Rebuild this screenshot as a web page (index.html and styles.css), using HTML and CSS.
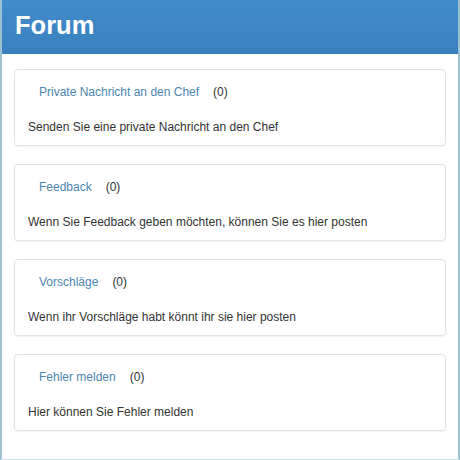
FILE: index.html
```html
<!DOCTYPE html>
<html>
<head>
<meta charset="utf-8">
<link rel="stylesheet" href="styles.css">
</head>
<body>
<div class="frame">
  <header class="header"><h1 class="title">Forum</h1></header>
  <main class="content">
    <section class="card">
      <div class="card-head"><a class="card-link" href="#">Private Nachricht an den Chef</a><span class="count">(0)</span></div>
      <p class="card-desc">Senden Sie eine private Nachricht an den Chef</p>
    </section>
    <section class="card">
      <div class="card-head"><a class="card-link" href="#">Feedback</a><span class="count">(0)</span></div>
      <p class="card-desc">Wenn Sie Feedback geben möchten, können Sie es hier posten</p>
    </section>
    <section class="card">
      <div class="card-head"><a class="card-link" href="#">Vorschläge</a><span class="count">(0)</span></div>
      <p class="card-desc">Wenn ihr Vorschläge habt könnt ihr sie hier posten</p>
    </section>
    <section class="card">
      <div class="card-head"><a class="card-link" href="#">Fehler melden</a><span class="count">(0)</span></div>
      <p class="card-desc">Hier können Sie Fehler melden</p>
    </section>
  </main>
</div>
</body>
</html>
```
FILE: styles.css
```css
html, body {
  margin: 0;
  padding: 0;
  background: #ffffff;
}
body {
  font-family: "Liberation Sans", Arial, sans-serif;
  color: #333333;
}
.frame {
  width: 460px;
  height: 460px;
  box-sizing: border-box;
  border-left: 2px solid #9cc2d2;
  border-right: 2px solid #9cc2d2;
  border-bottom: 1px solid #c9dde5;
  background: #ffffff;
  display: flex;
  flex-direction: column;
}
.header {
  height: 54px;
  background: linear-gradient(to bottom, #428bca, #3a80bf);
  display: flex;
  align-items: center;
  padding-left: 13px;
}
.title {
  margin: 0;
  color: #ffffff;
  font-size: 25.5px;
  font-weight: bold;
  line-height: 1;
  padding-bottom: 2px;
}
.content {
  padding: 15px 12px 0 12px;
  display: flex;
  flex-direction: column;
  gap: 18px;
}
.card {
  height: 77px;
  box-sizing: border-box;
  border: 1px solid #e3e3e3;
  border-radius: 4px;
  box-shadow: 0 1px 2px rgba(0,0,0,0.06);
  padding: 14px 13px 0 13px;
}
.card-head {
  display: flex;
  align-items: center;
  height: 16px;
  font-size: 12px;
  padding-left: 11px;
  gap: 14px;
}
.card-link {
  color: #4b86b0;
  text-decoration: none;
}
.count {
  color: #333333;
}
.card-desc {
  margin: 19px 0 0 0;
  font-size: 12px;
  line-height: 16px;
  color: #333333;
}
```
